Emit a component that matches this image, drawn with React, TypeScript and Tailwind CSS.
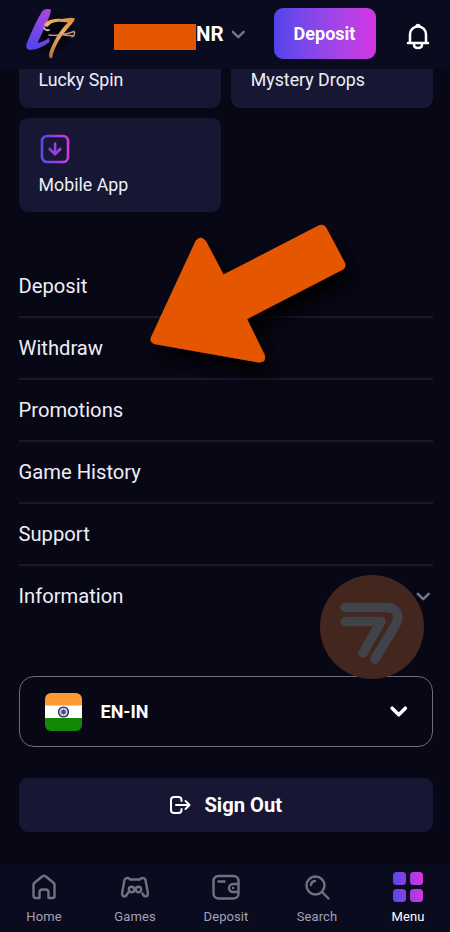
import React from "react";

type IconProps = { className?: string };

function Chevron({ className = "" }: IconProps) {
  return (
    <svg viewBox="0 0 16 10" className={className} fill="none" stroke="currentColor" strokeLinecap="round" strokeLinejoin="round">
      <path d="M2 2l6 6 6-6" />
    </svg>
  );
}

function Logo() {
  return (
    <svg viewBox="0 0 56 60" className="h-[60px] w-[56px]" fill="none">
      <defs>
        <linearGradient id="logoPurple" x1="30" y1="6" x2="12" y2="48" gradientUnits="userSpaceOnUse">
          <stop stopColor="#b446d8" />
          <stop offset="1" stopColor="#5345f0" />
        </linearGradient>
        <linearGradient id="logoGold" x1="50" y1="14" x2="28" y2="54" gradientUnits="userSpaceOnUse">
          <stop stopColor="#d98a3c" />
          <stop offset=".45" stopColor="#f2b368" />
          <stop offset="1" stopColor="#b97938" />
        </linearGradient>
        <radialGradient id="logoGlow">
          <stop offset=".6" stopColor="#04040e" />
          <stop offset="1" stopColor="#04040e" stopOpacity="0" />
        </radialGradient>
      </defs>
      <circle cx="31" cy="33" r="23" fill="url(#logoGlow)" />
      <path d="M22 11.500Q25 8 31 9.500C31 15 25 27 17.500 43Q22 42.500 29 38L29.500 42Q20 49.500 10 50Q5 49 6.500 44C11 33 16 21 22 11.500Z" fill="url(#logoPurple)" />
      <path d="M24 25C27 19 36 18.500 42 19C47 18.500 51 17 55 18.500C53 25 43 31 36 46Q33.500 51 32 58Q28 59 29.500 52C33 42 40 30 48 22.500C40 21.500 32 21 28 26.500Q25 27.500 24 25Z" fill="url(#logoGold)" />
      <path d="M29 35Q40 36.500 54 31.500Q56 33 52 37M44 35l10 1" stroke="#c99a70" strokeWidth="1.400" strokeLinecap="round" />
      <path d="M24 28q2 3 5 2" stroke="#c9b6ac" strokeWidth="1.800" strokeLinecap="round" />
    </svg>
  );
}

function Bell() {
  return (
    <svg viewBox="0 0 24 28" className="h-7 w-6 text-white" fill="none" stroke="currentColor" strokeWidth="2.500" strokeLinecap="round" strokeLinejoin="round">
      <path d="M10.300 4a1.900 1.900 0 0 1 3.400 0M2 21h20M4 20.500V12.500C4 8 7.200 4.500 12 4.500s8 3.500 8 8v8" />
      <path d="M8 21.500v1c0 2.200 1.600 3.500 4 3.500s4-1.300 4-3.500v-1" />
    </svg>
  );
}

function Header() {
  return (
    <header className="flex h-[69px] shrink-0 items-start bg-[#0b0b20]">
      <div className="ml-5 w-14">
        <Logo />
      </div>
      <div className="ml-[38px] mt-6 h-[26px] w-[82px] bg-[#e55600]" />
      <span className="mt-5 w-[28px] text-[20.500px] leading-[28px] font-bold text-white">NR</span>
      <Chevron className="mt-[29.500px] ml-[7px] h-[9px] w-[14.500px] stroke-[2.600] text-[#777584]" />
      <button className="mt-[8px] ml-[28px] h-[51px] w-[102px] rounded-[9px] bg-linear-to-r from-[#5144ec] to-[#d334e2] text-[18px] leading-none font-bold text-white">
        Deposit
      </button>
      <div className="mt-[22px] ml-[30.500px]">
        <Bell />
      </div>
    </header>
  );
}

function DownloadIcon() {
  return (
    <svg viewBox="0 0 30 30" className="h-[30px] w-[30px]" fill="none" stroke="url(#downloadGradient)" strokeWidth="2.600" strokeLinecap="round" strokeLinejoin="round">
      <defs>
        <linearGradient id="downloadGradient" x1="0" y1="15" x2="30" y2="15" gradientUnits="userSpaceOnUse">
          <stop stopColor="#5746e8" />
          <stop offset="1" stopColor="#d13ae0" />
        </linearGradient>
      </defs>
      <rect x="2" y="2" width="26" height="26" rx="5" />
      <path d="M15.100 9.500L15 20M9.700 15l5.300 5.300 5.300-5.300" />
    </svg>
  );
}

const navIcons: Record<string, React.ReactNode> = {
  Home: (
    <path d="M4.500 12.500Q4.500 11.500 5.500 10.700L13.500 4.300Q15 3.200 16.500 4.300L24.500 10.700Q25.500 11.500 25.500 12.500V24q0 2-2 2h-4v-5.500q0-3-3-3h-3q-3 0-3 3v5.500h-4q-2 0-2-2Z" />
  ),
  Games: (
    <>
      <path d="M10 7.500h10M10 7.500C9 5.500 5.500 5.500 4.500 8L2.200 20.500C1.500 25.500 6 25.500 7.500 21.500L9.500 19M20 7.500c1-2 4.500-2 5.500.5l2.300 12.500c.7 5-3.800 5-5.300 1" />
      <circle cx="11.500" cy="17.500" r="2.700" />
      <circle cx="18.500" cy="17.500" r="2.700" />
    </>
  ),
  Deposit: (
    <>
      <rect x="2.500" y="4" width="25" height="22.500" rx="5" />
      <path d="M7.500 9.500h6M27 12h-5a4 4 0 0 0 0 8h5M22 16h.1" />
    </>
  ),
  Search: (
    <>
      <circle cx="13.500" cy="13.500" r="9" />
      <path d="M20.500 20.500l6 6M9 13q.3-3.700 4-4" />
    </>
  ),
};

function MenuIcon() {
  return (
    <svg viewBox="0 0 30 30" className="h-[30px] w-[30px]">
      <defs>
        <linearGradient id="menuGradient" x1="0" y1="0" x2="30" y2="0" gradientUnits="userSpaceOnUse">
          <stop stopColor="#5647e8" />
          <stop offset="1" stopColor="#d634df" />
        </linearGradient>
      </defs>
      <path
        fill="url(#menuGradient)"
        d="M3.500 0h6Q13 0 13 3.500v6Q13 13 9.500 13h-6Q0 13 0 9.500v-6Q0 0 3.500 0ZM20.500 0h6Q30 0 30 3.500v6Q30 13 26.500 13h-6Q17 13 17 9.500v-6Q17 0 20.500 0ZM3.500 17h6Q13 17 13 20.500v6Q13 30 9.500 30h-6Q0 30 0 26.500v-6Q0 17 3.500 17ZM20.500 17h6Q30 17 30 20.500v6Q30 30 26.500 30h-6Q17 30 17 26.500v-6Q17 17 20.500 17Z"
      />
    </svg>
  );
}

function BottomNav() {
  return (
    <nav className="-mr-[3.500px] -ml-[1.500px] grid h-[68px] shrink-0 grid-cols-5 bg-[#0b0b20]">
      {["Home", "Games", "Deposit", "Search", "Menu"].map((name) => (
        <div key={name} className={`flex flex-col items-center pt-2 ${name === "Menu" ? "text-white" : "text-[#a3a2b0]"}`}>
          {name === "Menu" ? (
            <MenuIcon />
          ) : (
            <svg viewBox="0 0 30 30" className="h-[30px] w-[30px] text-[#72717e]" fill="none" stroke="currentColor" strokeWidth="2.400" strokeLinecap="round" strokeLinejoin="round">
              {navIcons[name]}
            </svg>
          )}
          <span className="mt-[6px] text-[13px] leading-[18px] tracking-[0.1px]">{name}</span>
        </div>
      ))}
    </nav>
  );
}

function PointerArrow() {
  return (
    <svg viewBox="0 0 240 190" className="pointer-events-none absolute top-[210px] left-[130px] h-[190px] w-[240px]">
      <defs>
        <filter id="arrowShadow" x="-20%" y="-20%" width="150%" height="150%">
          <feDropShadow dx="8" dy="13" stdDeviation="9" floodColor="#000000" floodOpacity="0.950" />
        </filter>
      </defs>
      <path
        d="M65.500 31Q70.500 24 76 31L93.500 64.500L188.500 15.500Q193.500 13 196.500 18L215 53Q216.500 57 213 59.500L117 109L134.500 144.500Q137 152.500 129 152.500L24 134Q19 132 21 127Z"
        fill="#e55600"
        filter="url(#arrowShadow)"
      />
    </svg>
  );
}

function Watermark() {
  return (
    <svg viewBox="0 0 104 104" className="pointer-events-none absolute top-[575px] left-[320px] h-[104px] w-[104px]" fill="none">
      <circle cx="52" cy="52" r="52" fill="#43271f" />
      <g stroke="#41434a" strokeWidth="9.500" strokeLinecap="round" strokeLinejoin="round">
        <path d="M25 32.500H67Q82 34 76 49L55 84" />
        <path d="M25 46.500H61L43 78" />
      </g>
    </svg>
  );
}

function App() {
  return (
    <div className="relative flex h-[932px] w-[450px] flex-col overflow-hidden bg-[#070716] font-['Roboto',sans-serif] text-[#eeeef6]">
      <Header />
      <main className="flex flex-1 flex-col pr-[17px] pl-[18.500px]">
        <div className="grid grid-cols-2 gap-x-[10px] gap-y-[10px] text-[17.800px] leading-[22px]">
          <div className="h-[39px] rounded-b-[9px] bg-[#171734] pl-5">Lucky Spin</div>
          <div className="h-[39px] rounded-b-[9px] bg-[#171734] pl-5">Mystery Drops</div>
          <div className="flex h-[94px] flex-col rounded-[9px] bg-[#171734] pt-4 pl-5">
            <span className="ml-[1.500px]">
              <DownloadIcon />
            </span>
            <span className="mt-[10px]">Mobile App</span>
          </div>
        </div>
        <div className="mt-[44px] flex flex-col text-[20.200px]">
          {["Deposit", "Withdraw", "Promotions", "Game History", "Support"].map((item) => (
            <div key={item} className="flex h-[62px] items-center border-b-2 border-[#191928]">
              {item}
            </div>
          ))}
          <div className="flex h-[60px] items-center justify-between">
            Information
            <span className="relative z-10 mr-[3px] text-[#777584]">
              <Chevron className="h-[9px] w-[14.500px] stroke-[2.800]" />
            </span>
          </div>
        </div>
        <div className="mt-[50px] flex h-[71px] shrink-0 items-center rounded-[15px] border-[1.500px] border-[#6e6d78] pr-[24.500px] pl-[25.500px]">
          <svg viewBox="0 0 37 38" className="h-[38px] w-[37px] rounded-[6px]">
            <path fill="#ff9933" d="M0 0h37v13H0z" />
            <path fill="#fff" d="M0 12.500h37v13H0z" />
            <path fill="#128807" d="M0 25h37v13H0z" />
            <circle cx="18.500" cy="19" r="4.900" fill="#d9d9eb" stroke="#282466" strokeWidth="1.400" />
            <path d="M18.500 14.500v9M14 19h9M15.300 15.800l6.400 6.400M15.300 22.200l6.400-6.400" stroke="#8582b8" strokeWidth=".5" />
            <circle cx="18.500" cy="19" r="2.300" fill="#4b468a" />
          </svg>
          <span className="ml-[18.500px] flex-1 text-[18px] font-bold text-white">EN-IN</span>
          <Chevron className="h-[11px] w-[17.500px] stroke-[3.200] text-white" />
        </div>
        <button className="mt-[31px] flex h-[54px] shrink-0 items-center justify-center rounded-[9px] bg-[#171734] text-[20.200px] font-bold text-white">
          <svg viewBox="0 0 22 20" className="mr-[13px] h-[20px] w-[22px]" fill="none" stroke="currentColor" strokeWidth="2" strokeLinecap="round" strokeLinejoin="round">
            <path d="M12.500 6V5q0-3-3-3H5Q2 2 2 5v10q0 3 3 3h4.500q3 0 3-3v-1M7 10h13M16.500 6l4 4-4 4" />
          </svg>
          Sign Out
        </button>
      </main>
      <BottomNav />
      <PointerArrow />
      <Watermark />
    </div>
  );
}

export default App;
